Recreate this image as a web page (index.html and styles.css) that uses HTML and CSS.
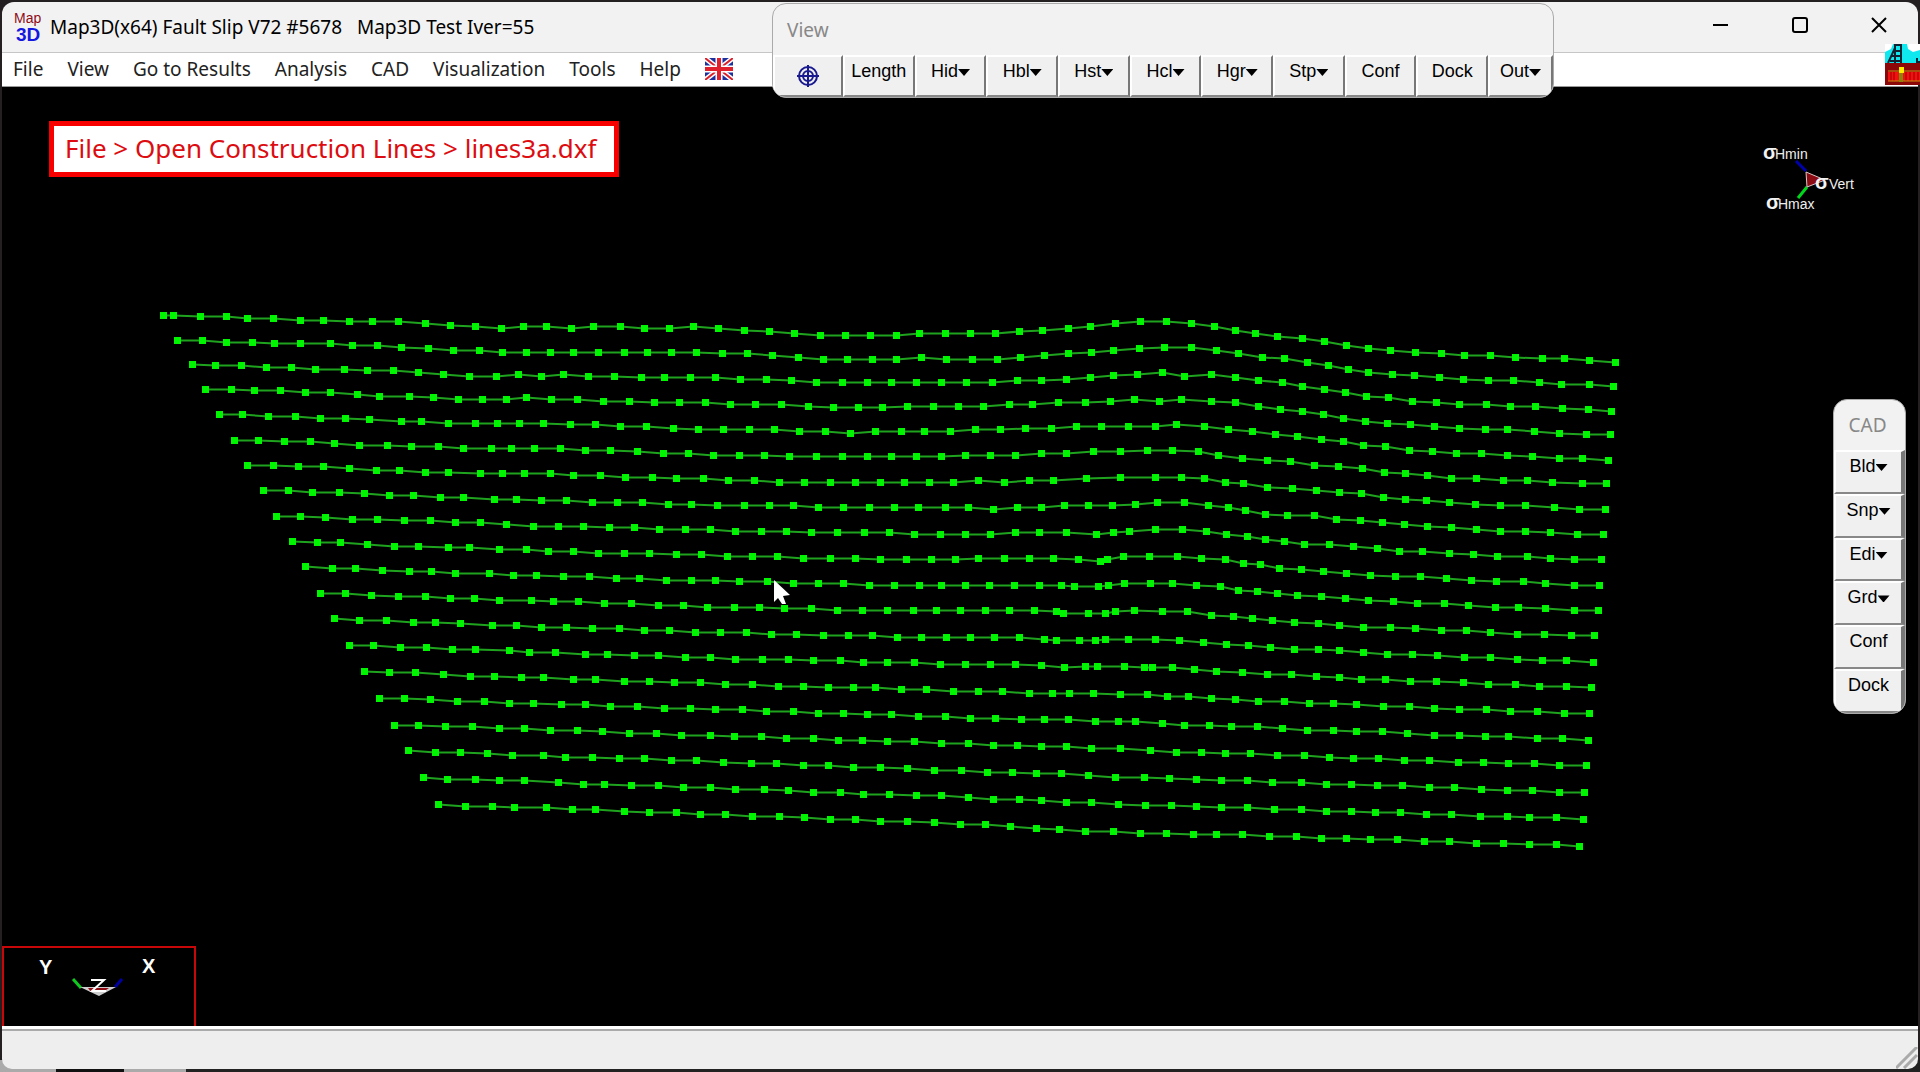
FILE: index.html
```
<!DOCTYPE html>
<html lang="en">
<head>
<meta charset="utf-8">
<title>Map3D(x64) Fault Slip V72 #5678</title>
<link rel="stylesheet" href="styles.css">
</head>
<body>
<div class="window">
  <header class="titlebar">
    <div class="app-icon" aria-hidden="true"><span>Map</span><b>3D</b></div>
    <h1 class="title">Map3D(x64) Fault Slip V72 #5678 &nbsp; Map3D Test Iver=55</h1>
    <div class="controls">
      <button type="button" aria-label="Minimize"><svg width="16" height="16" viewBox="0 0 16 16"><path d="M0 8h15"/></svg></button>
      <button type="button" aria-label="Maximize"><svg width="16" height="16" viewBox="0 0 16 16"><rect x="1" y="1" width="14" height="14" rx="2"/></svg></button>
      <button type="button" aria-label="Close"><svg width="16" height="16" viewBox="0 0 16 16"><path d="M1 1l14 14M15 1L1 15"/></svg></button>
    </div>
  </header>

  <nav class="menubar">
    <button type="button">File</button>
    <button type="button">View</button>
    <button type="button">Go to Results</button>
    <button type="button">Analysis</button>
    <button type="button">CAD</button>
    <button type="button">Visualization</button>
    <button type="button">Tools</button>
    <button type="button">Help</button>
    <button type="button" aria-label="Language">
      <svg class="flag" width="28" height="22" viewBox="0 0 28 22">
        <rect width="28" height="22" fill="#1c2f9c"/>
        <path d="M0 0l28 22M28 0L0 22" stroke="#fff" stroke-width="5"/>
        <path d="M0 0l28 22M28 0L0 22" stroke="#d8202c" stroke-width="2"/>
        <path d="M14 0v22M0 11h28" stroke="#fff" stroke-width="7"/>
        <path d="M14 0v22M0 11h28" stroke="#e0202c" stroke-width="4"/>
      </svg>
    </button>
  </nav>

  <main class="viewport">
    <svg class="scene" viewBox="2 87 1916 939" role="img" aria-label="Construction lines">
      <defs>
        <marker id="node" viewBox="0 0 7 7" refX="3.5" refY="3.5" markerWidth="7" markerHeight="7" markerUnits="userSpaceOnUse">
          <rect width="7" height="7" fill="#00f500"/>
        </marker>
      </defs>
      <g id="lines"></g>

      <g class="stress-axes">
        <path d="M1796 161l10 10" stroke="#0000a8" stroke-width="3"/>
        <path d="M1807 187l-9 11" stroke="#00d81c" stroke-width="3"/>
        <path d="M1806 172l19 8-18 7z" fill="#8c0a12" stroke="#d8c8c8"/>
        <text class="sigma" x="1763" y="159">σ</text><text class="axis" x="1775" y="159">Hmin</text>
        <text class="sigma" x="1815" y="189">σ</text><text class="axis" x="1829" y="189">Vert</text>
        <text class="sigma" x="1766" y="209">σ</text><text class="axis" x="1778" y="209">Hmax</text>
      </g>

      <g class="triad">
        <path class="frame" d="M3 1026V947H195V1026"/>
        <path d="M73 979l8 9" stroke="#10c820" stroke-width="3"/>
        <path d="M122 979l-7 8" stroke="#0000a0" stroke-width="3"/>
        <path d="M80 987h36l-17 9z" fill="#ccc"/>
        <path d="M88 988h21l-6 4h-12z" fill="#900a14"/>
        <text class="axis-letter" x="39" y="974">Y</text>
        <text class="axis-letter" x="142" y="973">X</text>
        <path d="M91 980h13l-12 11h14" fill="none" stroke="#fff" stroke-width="2"/>
      </g>

      <path d="M774 580v22l4-4 4 6h4l-3-8 7-1z" fill="#fff"/>
    </svg>

    <p class="callout">File &gt; Open Construction Lines &gt; lines3a.dxf</p>
  </main>

  <footer class="statusbar">
    <svg width="22" height="22" viewBox="0 0 22 22" aria-hidden="true"><path d="M0 21L21 0M8 21L21 8" stroke="#aaa" stroke-width="3"/></svg>
  </footer>

  <svg class="mine-icon" width="35" height="41" viewBox="0 0 35 41" aria-hidden="true">
    <rect width="35" height="20" fill="#10e8f0"/>
    <path d="M0 0h8l-2 5-6 3zM22 0h13v6l-7 2-5-3z" fill="#fff"/>
    <path d="M3 19L10 4V1h6v20M8 7h8M7 12h9M5 17h11M10 3v16M32 14v4h3" fill="none" stroke="#123" stroke-width="2"/>
    <rect y="19" width="35" height="22" fill="#8c0808"/>
    <path d="M3 28h32v9H3z" fill="#f41010"/>
    <path d="M6 28v9M9 28v9M21 28v9M25 28v9M29 28v9M33 28v9" stroke="#900"/>
    <path d="M3 37h32M3 27h32" stroke="#c89010"/>
    <path d="M14 29h4v9h-4z" fill="#8a8408"/>
    <path d="M14 23h5v6h-5z" fill="#ffec00"/>
  </svg>

  <section class="palette view-palette" aria-label="View">
    <h2>View</h2>
    <div class="tools">
      <button type="button" aria-label="Center">
        <svg class="target" width="24" height="24" viewBox="0 0 24 24"><circle cx="12" cy="12" r="9"/><circle cx="12" cy="12" r="5"/><path d="M12 1v22M1 12h22"/></svg>
      </button>
      <button type="button">Length</button>
      <button type="button">Hid<i></i></button>
      <button type="button">Hbl<i></i></button>
      <button type="button">Hst<i></i></button>
      <button type="button">Hcl<i></i></button>
      <button type="button">Hgr<i></i></button>
      <button type="button">Stp<i></i></button>
      <button type="button">Conf</button>
      <button type="button">Dock</button>
      <button type="button">Out<i></i></button>
    </div>
  </section>

  <section class="palette cad-palette" aria-label="CAD">
    <h2>CAD</h2>
    <div class="tools">
      <button type="button">Bld<i></i></button>
      <button type="button">Snp<i></i></button>
      <button type="button">Edi<i></i></button>
      <button type="button">Grd<i></i></button>
      <button type="button">Conf</button>
      <button type="button">Dock</button>
    </div>
  </section>
</div>
<script src="lines.js"></script>
</body>
</html>
```
FILE: lines.js
```
// Origins of the drawing's sheets; points on a sheet are in thirds of a pixel.
const SHEETS = {
  A: [140, 290], B: [640, 290], C: [1130, 290],
  D: [240, 550], E: [740, 540], F: [1140, 590]
};

const LINES = [
  { A: "70,77 101,77 181,82 258,82 323,88 400,88 480,92 551,92 627,97 698,97 774,97 855,102 931,107 1007,112 1083,117 1149,112 1219,112 1295,117 1361,112 1442,112",
    B: "13,117 89,117 160,112 236,117 312,122 388,127 464,132 540,137 616,137 692,137 768,137 839,132 915,132 991,132 1067,132 1137,127 1208,122 1284,117 1350,112 1426,102",
    C: "32,97 108,97 184,102 254,112 315,122 376,132 442,142 518,148 584,157 650,168 715,178 781,183 857,188 933,193 1004,198 1080,198 1156,203 1237,208 1303,208 1379,213 1455,218" },
  { A: "111,153 187,153 258,158 338,158 404,163 480,163 571,163 637,168 713,168 784,173 865,178 941,183 1017,183 1088,188 1159,188 1230,188 1300,188 1376,188 1453,188",
    B: "23,188 94,188 170,188 246,193 322,193 398,198 474,204 550,209 621,209 697,209 768,209 844,204 920,209 996,209 1072,209 1142,204 1213,198 1284,193 1355,188 1421,183",
    C: "27,178 103,173 184,173 260,183 325,193 396,203 462,208 533,218 594,229 655,239 715,248 786,254 852,259 928,264 999,269 1075,274 1151,274 1227,280 1293,285 1379,285 1450,290" },
  { A: "156,224 227,229 303,229 379,234 455,234 526,239 612,239 683,244 759,244 835,249 911,254 987,260 1068,260 1134,254 1204,260 1270,254 1346,260 1422,260",
    B: "3,264 74,264 150,264 226,264 302,269 378,269 454,274 530,280 606,280 682,280 753,280 829,280 904,280 980,280 1056,280 1132,274 1203,274 1279,269 1350,264 1421,259",
    C: "22,254 97,249 164,260 245,254 315,264 386,274 457,280 518,290 584,300 645,310 710,320 776,325 847,335 918,340 989,346 1070,346 1141,350 1217,350 1298,356 1374,361 1445,366" },
  { A: "197,300 273,300 344,304 420,304 496,310 571,310 652,315 718,320 809,320 880,325 956,330 1028,330 1098,330 1159,325 1235,330 1311,330 1391,335 1467,335",
    B: "43,340 119,340 195,340 271,345 347,345 423,345 504,350 580,355 656,355 727,355 803,350 879,350 955,350 1031,350 1107,345 1178,345 1254,340 1335,340 1411,335",
    C: "12,330 87,335 154,330 245,335 315,340 386,350 452,360 518,366 579,376 640,386 705,396 771,401 842,406 913,411 989,416 1065,421 1131,421 1212,426 1288,431 1369,436 1440,436" },
  { A: "237,376 308,376 384,380 465,380 541,386 617,386 688,391 784,396 845,396 926,401 1007,401 1072,401 1138,401 1210,401 1290,406 1366,406 1442,411",
    B: "18,411 99,416 175,421 251,421 327,421 403,421 479,426 555,426 631,431 707,426 783,426 854,426 930,426 1006,421 1082,421 1157,416 1233,416 1309,411 1385,411 1466,411",
    C: "77,411 138,406 224,411 295,421 366,426 437,436 503,441 574,451 640,457 700,467 766,472 837,482 908,487 979,492 1055,492 1131,497 1207,502 1288,507 1358,507 1435,512" },
  { A: "283,452 354,452 434,457 510,457 582,462 657,467 743,467 815,472 895,472 971,477 1053,477 1113,477 1184,477 1260,477 1336,483 1411,483 1492,487",
    B: "69,492 145,492 221,497 297,497 373,497 449,502 530,502 606,502 682,502 753,502 829,502 904,502 976,497 1051,497 1127,497 1203,492 1279,492 1360,487 1441,487",
    C: "52,482 128,482 204,487 265,497 336,507 411,512 482,517 554,527 625,532 696,538 762,548 827,553 893,558 964,568 1040,568 1121,573 1192,573 1268,578 1358,583 1430,583" },
  { A: "323,528 400,528 476,532 551,532 627,538 708,542 779,542 855,548 926,548 1022,553 1088,553 1154,553 1230,553 1300,558 1381,558 1457,563",
    B: "38,563 109,568 190,568 266,573 342,573 418,578 494,578 570,578 646,578 722,578 793,578 869,578 940,578 1016,573 1092,578 1168,573 1239,573 1340,568 1441,563",
    C: "77,563 153,563 224,568 285,578 341,583 411,593 487,598 559,603 629,608 695,613 761,624 827,629 888,634 959,639 1035,644 1110,649 1186,649 1272,654 1348,659 1425,659" },
  { A: "369,603 445,603 516,608 597,608 673,613 749,619 820,619 900,624 971,624 1062,629 1128,629 1204,634 1280,634 1356,639 1432,639",
    B: "8,639 84,644 155,644 231,649 312,649 388,649 459,649 535,654 611,654 687,654 763,654 834,654 915,654 986,654 1061,659 1132,654 1203,654 1274,649 1345,649 1416,649",
    C: "17,644 83,639 164,639 234,649 295,654 346,664 407,674 472,679 554,679 620,689 690,694 756,699 822,705 893,710 964,715 1040,720 1110,725 1186,725 1262,730 1343,735 1420,735" },
  { A: "410,680 480,680 556,684 637,689 713,689 794,694 870,694 946,700 1022,700 1098,705 1179,710 1255,710 1331,710 1407,715 1483,715",
    B: "59,720 135,720 211,720 287,725 363,725 439,725 515,730 591,730 672,730 748,730 824,735 900,735 976,735 1051,735 1127,730 1198,730 1279,730 1370,735 1421,730 1467,725",
    C: "77,720 158,720 229,725 290,735 351,740 407,750 462,755 523,765 599,765 670,770 741,776 807,786 878,786 959,791 1030,796 1101,801 1192,801 1262,806 1333,811 1415,811" },
  { A: "456,755 531,760 602,760 683,765 764,770 835,770 926,775 987,775 1078,780 1159,780 1225,785 1300,785 1376,791 1453,791",
    B: "28,791 109,796 185,796 261,801 337,801 413,801 489,806 570,806 646,806 722,811 798,811 874,811 945,811 1016,806 1092,806 1168,806 1239,806 1314,811 1380,816 1401,811 1451,801",
    C: "57,801 143,801 214,806 285,811 341,821 391,826 447,836 513,841 579,847 650,852 721,857 796,862 872,862 948,867 1024,872 1100,877 1181,877 1247,882 1333,887 1409,887" },
  { D: "196,52 276,57 347,57 428,62 509,67 575,67 646,71 747,71 819,77 890,77 970,82 1047,82 1128,87 1198,87 1279,92 1355,92 1425,92 1497,97",
    E: "83,127 159,131 235,131 311,131 387,137 463,137 539,137 605,137 676,137 747,137 822,137 898,137 964,137 1004,142 1075,142 1105,137 1152,131 1232,131 1298,131",
    C: "199,887 270,892 326,902 381,907 442,912 503,917 574,922 645,928 715,933 791,937 862,942 944,942 1014,947 1095,953 1166,953 1247,958 1333,963 1405,963" },
  { D: "242,132 317,132 393,137 474,142 555,142 631,147 702,147 778,152 874,152 940,157 1016,157 1092,162 1173,162 1254,168 1330,168 1401,173 1482,173",
    E: "58,203 134,208 215,208 291,213 367,213 442,213 519,213 590,213 661,213 736,213 807,213 883,213 948,217 969,223 1045,223 1096,223 1126,217 1182,213 1268,217 1342,217",
    F: "214,77 280,82 336,88 397,93 462,98 534,103 599,108 670,113 751,113 827,118 903,123 979,123 1050,128 1131,134 1212,134 1293,139 1364,139" },
  { D: "282,208 358,213 439,213 520,218 585,218 661,223 757,228 828,228 904,233 980,233 1057,238 1137,238 1214,243 1289,243 1365,248 1441,248",
    E: "18,279 93,284 169,284 250,289 326,289 397,289 473,294 544,294 620,294 691,294 762,294 838,294 913,299 949,304 1019,304 1065,304 1096,299 1166,299 1247,299 1318,304",
    F: "189,159 260,164 326,169 392,174 462,179 534,179 599,184 670,189 741,194 817,194 893,199 974,204 1050,204 1131,209 1207,214 1278,214 1359,219" },
  { D: "327,289 399,289 480,294 560,294 636,299 707,299 808,304 869,309 945,309 1036,314 1102,314 1183,319 1254,319 1335,324 1411,324 1487,329",
    E: "68,359 144,359 220,364 301,364 371,370 442,370 524,370 600,375 676,375 751,375 827,375 903,379 974,385 1035,380 1071,380 1152,380 1212,385 1238,385 1298,385",
    F: "164,240 230,245 306,250 382,255 453,255 529,260 599,265 665,270 736,270 812,275 888,275 969,280 1045,285 1126,285 1197,290 1278,290 1354,295" },
  { D: "373,365 449,370 525,370 610,375 692,380 762,380 844,385 910,385 1001,390 1066,390 1153,395 1229,395 1304,400 1380,400 1457,405",
    E: "38,435 114,440 189,440 265,445 341,445 407,445 483,450 559,450 640,455 716,455 787,455 867,461 938,461 989,461 1060,461 1141,466 1222,466 1283,471 1345,471",
    F: "214,326 285,331 356,336 432,336 508,341 579,341 650,346 731,351 807,351 883,356 959,361 1040,361 1111,366 1192,366 1273,371 1349,372" },
  { D: "418,446 494,446 570,451 651,456 732,456 808,461 879,461 965,466 1036,466 1112,471 1193,471 1274,476 1350,476 1426,481",
    E: "8,511 78,516 159,516 235,521 311,521 382,526 453,526 534,531 615,531 691,536 766,536 843,541 913,541 984,541 1065,546 1136,546 1187,546 1268,552 1334,557",
    F: "209,407 275,412 351,412 427,417 503,422 579,422 650,427 726,427 802,432 883,437 959,437 1035,442 1105,442 1192,447 1268,447 1344,452" },
  { D: "464,527 535,527 616,532 697,532 778,537 854,537 930,542 1011,542 1087,547 1168,552 1249,552 1325,557 1411,557 1482,562",
    E: "63,592 139,597 220,597 296,602 367,602 442,607 524,607 605,612 686,612 761,617 832,617 903,622 979,622 1055,627 1141,627 1232,633 1308,638",
    F: "184,488 255,493 331,493 412,498 493,498 569,503 640,508 716,508 792,513 868,513 954,518 1030,518 1106,523 1182,523 1258,528 1339,528" },
  { D: "505,603 585,608 661,608 742,613 818,618 909,618 975,623 1057,623 1138,628 1213,628 1294,633 1370,633 1451,638",
    E: "33,673 108,673 189,678 265,678 341,683 422,683 503,688 584,693 665,693 741,698 817,698 888,703 964,703 1045,708 1126,713 1212,713 1288,718",
    F: "169,569 245,574 321,574 397,579 483,579 559,584 635,584 711,589 787,589 868,594 944,594 1025,599 1101,604 1177,604 1258,609 1334,609" },
  { D: "550,684 621,689 707,689 778,694 854,694 955,699 1031,704 1092,704 1173,709 1254,709 1330,714 1410,714 1486,719",
    E: "73,749 144,754 220,759 301,759 371,764 448,764 529,769 605,769 686,774 761,779 838,779 903,784 979,789 1055,789 1136,794 1217,799 1293,799",
    F: "169,650 245,655 321,655 402,660 483,660 559,665 635,665 706,670 782,670 858,675 934,675 1020,680 1101,680 1167,685 1248,685 1329,690" },
  { D: "596,765 677,770 757,770 824,775 920,775 996,780 1067,780 1153,785 1229,790 1310,790 1380,795 1457,795",
    E: "38,830 119,830 194,835 270,840 346,840 422,845 503,845 584,850 660,855 736,855 812,861 888,866 959,871 1035,876 1121,876 1202,881 1278,881",
    F: "159,736 230,736 306,736 387,741 468,741 544,746 620,746 691,751 771,751 853,756 928,756 1010,761 1090,761 1167,766 1248,766 1319,771" }
];

const layer = document.getElementById("lines");
for (const line of LINES) {
  const points = [];
  for (const [sheet, list] of Object.entries(line)) {
    const [ox, oy] = SHEETS[sheet];
    for (const pair of list.split(" ")) {
      const [x, y] = pair.split(",").map(Number);
      points.push((Math.floor(ox + x / 3) + 0.5) + "," + (Math.round(oy + y / 3) - 0.5));
    }
  }
  const path = document.createElementNS("http://www.w3.org/2000/svg", "polyline");
  path.setAttribute("class", "line");
  path.setAttribute("points", points.join(" "));
  layer.appendChild(path);
}
```
FILE: styles.css
```
* { box-sizing: border-box; }

body {
  margin: 0;
  min-height: 100vh;
  display: flex;
  padding: 2px 2px 3px;
  background: linear-gradient(to right, #aaa 56px, #111 56px, #111 124px, #aaa 124px, #aaa 186px, #222 186px) bottom / 100% 12px no-repeat #242022;
  font-family: "Noto Sans", "Open Sans", sans-serif;
  font-size: 19px;
  color: #000;
}

button {
  margin: 0;
  padding: 0;
  border: 0;
  background: none;
  font: inherit;
  color: inherit;
}

h1, h2, p { margin: 0; font-weight: 400; }

.window {
  position: relative;
  flex: 1;
  display: flex;
  flex-direction: column;
}

.titlebar {
  display: flex;
  align-items: center;
  height: 51px;
  padding-left: 12px;
  border-bottom: 1px solid #c6c6c6;
  border-radius: 12px 12px 0 0;
  background: #f2f2f2;
}

.app-icon {
  display: flex;
  flex-direction: column;
  width: 36px;
  font-family: "Liberation Sans", sans-serif;
}
.app-icon span { font-size: 14px; line-height: 15px; color: #900c18; }
.app-icon b { padding-left: 2px; font-size: 19px; line-height: 18px; color: #1418e0; }

.title { font-size: 19px; line-height: 28px; white-space: pre; }

.controls { display: flex; margin-left: auto; align-self: stretch; }
.controls button { width: 79px; display: flex; align-items: center; justify-content: center; padding-bottom: 4px; }
.controls svg { fill: none; stroke: #000; stroke-width: 2; }

.menubar {
  display: flex;
  align-items: center;
  gap: 24px;
  height: 34px;
  padding-left: 11px;
  border-bottom: 1px solid #999;
  background: #fff;
  line-height: 32px;
  color: #222;
}
.menubar button { padding-bottom: 2px; }
.flag { display: block; }

.viewport {
  position: relative;
  flex: 1;
  background: #000;
}
.scene { display: block; width: 100%; height: 100%; position: absolute; }

.line {
  fill: none;
  stroke: #1fa31f;
  stroke-width: 2;
  marker-start: url(#node);
  marker-mid: url(#node);
  marker-end: url(#node);
}

.sigma { font: bold 20px "Liberation Sans", sans-serif; fill: #f2f2f2; }
.axis { font: 14px "Liberation Sans", sans-serif; fill: #eee; }
.axis-letter { font: bold 20px "Liberation Sans", sans-serif; fill: #fff; }
.frame { fill: none; stroke: #c80808; stroke-width: 2; }

.callout {
  position: absolute;
  left: 47px;
  top: 34px;
  padding: 4px 18px 6px 11px;
  border: 5px solid #f80000;
  background: #fff;
  color: #dc0c10;
  font-size: 26px;
  line-height: 36px;
  white-space: nowrap;
}

.statusbar {
  display: flex;
  align-items: flex-end;
  justify-content: flex-end;
  height: 43px;
  border-top: 3px solid #fff;
  border-radius: 0 0 10px 10px;
  background: #eee;
  box-shadow: inset 0 2px #aaa;
  overflow: hidden;
}

.mine-icon { position: absolute; right: -2px; top: 42px; }

.palette {
  position: absolute;
  display: flex;
  flex-direction: column;
  overflow: hidden;
  border: 1px solid #aaa;
  border-radius: 14px;
  background: #f2f2f2;
}
.palette h2 { color: #888; font-size: 19px; }
.palette .tools { display: flex; flex: 1; }
.palette .tools button {
  display: flex;
  justify-content: center;
  border: 2px solid;
  border-color: #fff #777 #888 #fff;
  background: #f0f0f0;
  font: 18px/22px "Liberation Sans", sans-serif;
}
.palette i {
  margin-top: 9px;
  width: 12px;
  height: 7px;
  background: #000;
  clip-path: polygon(0 0, 100% 0, 50% 100%);
}

.view-palette { left: 770px; top: 1px; width: 782px; height: 95px; }
.view-palette h2 { padding: 12px 14px; height: 51px; line-height: 28px; }
.view-palette .tools button { flex: 1; padding-top: 3px; }
.view-palette .tools button:first-child { flex: 0 0 70px; }
.view-palette .tools button:last-child { flex: 0 0 65px; }
.target { margin-top: 4px; fill: none; stroke: #1a1a90; stroke-width: 2; }

.cad-palette { right: 12px; top: 397px; width: 73px; height: 315px; }
.cad-palette h2 { height: 50px; line-height: 50px; text-align: center; padding-right: 4px; }
.cad-palette .tools { flex-direction: column; }
.cad-palette .tools button { flex: 1; padding-top: 3px; border-right-width: 4px; }
```
